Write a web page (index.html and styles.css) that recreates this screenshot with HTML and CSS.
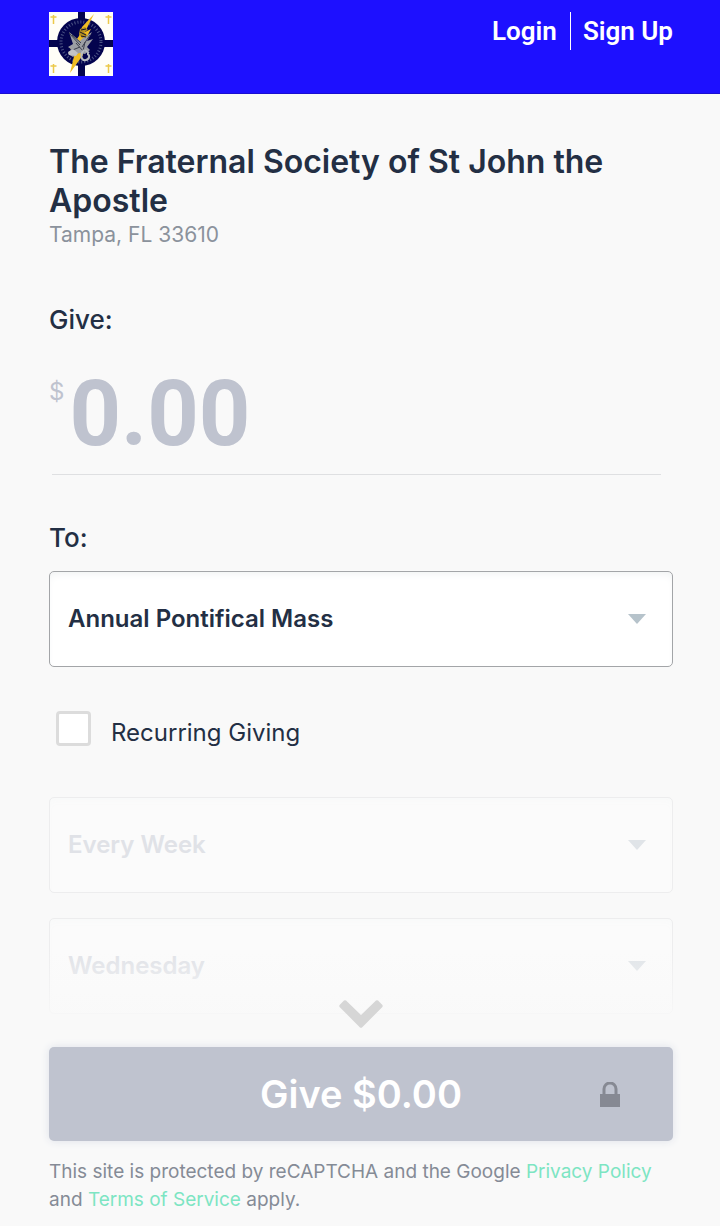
FILE: index.html
```html
<!DOCTYPE html>
<html lang="en">
<head>
    <meta charset="UTF-8">
    <meta name="viewport" content="width=device-width, initial-scale=1.0">
    <title>Give - The Fraternal Society of St John the Apostle</title>
    <link rel="stylesheet" href="styles.css">
</head>
<body>
    <header class="navbar">
        <a class="logo" href="#" aria-label="Home">
            <svg width="64" height="64" viewBox="0 0 64 64">
                <rect width="64" height="64" fill="#fffef8"/>
                <path d="M29 0h7v64h-7zM0 28h64v7H0z" fill="#04044e"/>
                <g stroke="#ecc94a" stroke-width="1.500" fill="none">
                    <path d="M4.500 3v9M1.500 5h6M59.500 3v9M56.500 5h6"/>
                    <path d="M4.500 52v9M1.500 54h6M59.500 52v9M56.500 54h6"/>
                </g>
                <circle cx="32" cy="30" r="24" fill="#04044e"/>
                <circle cx="32" cy="30" r="20" fill="none" stroke="#4d5585" stroke-width="3" stroke-dasharray="1 2"/>
                <path d="M45 2L33 15l-3 9-9 13 6-1-6 25 13-18-2-7 10-19-6 3z" fill="#f0bd22"/>
                <path d="M20 20l11 9 3-3 9-6-5 9 6-2-6 8 3 3-5 4-6-1-6 4-5-3 3-5-3-2 5-3z" fill="#9c9ea4"/>
                <path d="M20 21l11 12M23 23l9 8M41 23l-8 12M21 39l10-4M27 31l7 8M36 30l-2 9" stroke="#3b3e4c" stroke-width="1" fill="none"/>
                <path d="M31 17l5-2 3 3-4 2 4 4-6 2-3-4z" fill="#b48f1f"/>
                <path d="M31 20l6 3M32 18l5-1M32 24l5 1" stroke="#17172a" stroke-width="1"/>
                <path d="M35 38c-5 6-2 11 2 10s4-6 1-6M36 38l4 3" stroke="#b9bbc0" stroke-width="2" fill="none"/>
                <path d="M19 40l5-3 5 4-2 3-7-1z" fill="#c3c4c8"/>
            </svg>
        </a>
        <nav class="nav-links">
            <a href="#">Login</a>
            <a href="#">Sign Up</a>
        </nav>
    </header>

    <form>
        <main class="container">
            <h1>The Fraternal Society of St John the Apostle</h1>
            <p class="location">Tampa, FL 33610</p>

            <label class="field-label" for="amount">Give:</label>
            <div class="amount">
                <span class="currency">$</span>
                <input type="text" id="amount" name="amount" placeholder="0.00" inputmode="decimal">
            </div>
            <hr>

            <label class="field-label" for="fund">To:</label>
            <div class="select">
                <select id="fund" name="fund">
                    <option>Annual Pontifical Mass</option>
                </select>
                <svg class="arrow" width="18" height="10" viewBox="0 0 18 10"><path d="M0 0h18L9 10z"/></svg>
            </div>

            <div class="recurring">
                <input type="checkbox" id="recurring" name="recurring">
                <label for="recurring">Recurring Giving</label>
            </div>

            <div class="select disabled">
                <select name="frequency" aria-label="Frequency" disabled>
                    <option>Every Week</option>
                </select>
                <svg class="arrow" width="18" height="10" viewBox="0 0 18 10"><path d="M0 0h18L9 10z"/></svg>
            </div>
            <div class="select disabled">
                <select name="day" aria-label="Day" disabled>
                    <option>Wednesday</option>
                </select>
                <svg class="arrow" width="18" height="10" viewBox="0 0 18 10"><path d="M0 0h18L9 10z"/></svg>
            </div>
        </main>

        <footer class="give-bar">
            <svg class="chevron" width="44" height="28" viewBox="0 0 44 28">
                <path d="M5 .6Q6 0 7 .6L22 15 37 .6Q38 0 39 .6L43.400 5Q44 6 43.400 7L23 27.400Q22 28 21 27.400L.6 7Q0 6 .6 5z" fill="#d6d6d6"/>
            </svg>
            <button type="submit" class="give-button">
                Give $0.00
                <svg class="lock" width="20" height="25" viewBox="0 0 20 25">
                    <path d="M4 12V7a6 6 0 0 1 12 0v5" fill="none" stroke="#868993" stroke-width="3"/>
                    <rect y="12" width="20" height="13" fill="#868993"/>
                </svg>
            </button>
            <p class="legal">This site is protected by reCAPTCHA and the Google <a href="#">Privacy Policy</a> and <a href="#">Terms of Service</a> apply.</p>
        </footer>
    </form>
</body>
</html>
```
FILE: styles.css
```css
* {
    box-sizing: border-box;
}
body {
    font-family: Inter, "Liberation Sans", sans-serif;
    background-color: #f9f9f9;
    color: #232f44;
    margin: 0;
}
h1, p {
    margin: 0;
}
.navbar {
    display: flex;
    justify-content: space-between;
    align-items: flex-start;
    height: 94px;
    padding: 12px 47px 0 49px;
    background-color: #1d10ff;
    border-bottom: 1px solid #1a0ed0;
}
.logo svg {
    display: block;
}
.nav-links {
    display: flex;
}
.nav-links a {
    color: #fff;
    font-family: Roboto, sans-serif;
    font-size: 26px;
    font-weight: 600;
    line-height: 38px;
    text-decoration: none;
}
.nav-links a + a {
    margin-left: 13px;
    padding-left: 12px;
    border-left: 1px solid #fff;
}
.container {
    padding: 48px 47px 0 49px;
}
h1 {
    font-size: 32px;
    font-weight: 600;
    line-height: 39px;
}
.location {
    margin-top: 1px;
    margin-bottom: 55px;
    color: #8b929c;
    font-size: 21px;
    line-height: 28px;
}
.field-label {
    display: block;
    font-size: 26px;
    font-weight: 500;
    line-height: 32px;
}
.amount {
    display: flex;
    align-items: flex-start;
    gap: 5px;
    margin-top: 18px;
}
.currency {
    padding-top: 22px;
    color: #bfc3cf;
    font-size: 24px;
    line-height: 32px;
}
.amount input {
    flex: 1;
    min-width: 0;
    height: 120px;
    padding: 0;
    border: none;
    outline: none;
    background: none;
    font-family: Roboto, sans-serif;
    font-size: 90px;
    font-weight: 700;
}
.amount input::placeholder {
    color: #bfc3cf;
    opacity: 1;
}
hr {
    margin: 0 12px 47px 3px;
    border: none;
    border-top: 1px solid #dfe0e2;
}
.select {
    position: relative;
    margin-top: 17px;
}
.select select {
    display: block;
    width: 100%;
    height: 96px;
    padding: 0 60px 2px 18px;
    appearance: none;
    border: 1px solid #a3a5a8;
    border-radius: 5px;
    background-color: #fff;
    box-shadow: inset 0 5px 8px -3px #f0f2f3;
    color: #232f44;
    font-family: inherit;
    font-size: 24px;
    font-weight: 600;
    opacity: 1;
}
.arrow {
    position: absolute;
    top: 43px;
    right: 27px;
    fill: #b6c3cb;
    pointer-events: none;
}
.recurring {
    display: flex;
    align-items: flex-start;
    gap: 20px;
    margin: 44px 0 47px 7px;
    font-size: 24px;
    line-height: 35px;
}
.recurring input {
    width: 35px;
    height: 35px;
    margin: 0;
    appearance: none;
    border: 3px solid #dcdcdc;
    border-radius: 4px;
    background-color: #fff;
}
.recurring label {
    padding-top: 4px;
}
.disabled {
    margin-top: 25px;
}
.disabled select {
    border-color: #ededee;
    background-color: #fbfbfb;
    box-shadow: inset 0 5px 8px -3px #f8f9f9;
    color: #e0e2e7;
}
.disabled .arrow {
    fill: #e0e4e8;
}
.give-bar {
    position: sticky;
    bottom: 0;
    margin-top: -64px;
    padding: 50px 47px 12px 49px;
    background: linear-gradient(rgba(249, 249, 249, 0), #f9f9f9 80px);
}
.chevron {
    display: block;
    margin: 0 auto 19px;
}
.give-button {
    position: relative;
    display: block;
    width: 100%;
    height: 94px;
    border: none;
    border-radius: 5px;
    background-color: #bfc3cf;
    box-shadow: 0 0 8px #dde1e9;
    color: #fff;
    font-family: inherit;
    font-size: 38px;
    font-weight: 600;
    line-height: 48px;
}
.lock {
    position: absolute;
    top: 35px;
    right: 53px;
}
.legal {
    margin-top: 17px;
    color: #858b96;
    font-size: 19px;
    line-height: 28px;
}
.legal a {
    color: #7de5c3;
    text-decoration: none;
}
```
